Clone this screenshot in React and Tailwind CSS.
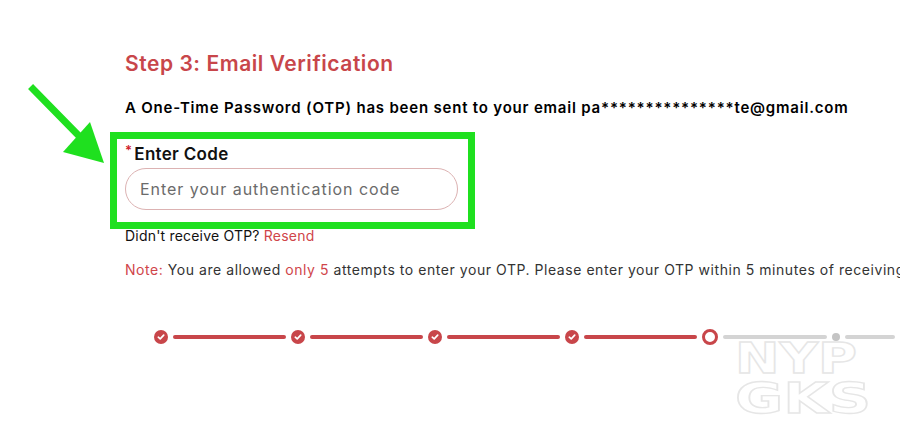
import React from 'react';

const CheckDot = () => (
  <div className="w-[14px] h-[14px] shrink-0 rounded-full bg-[#c8464a] flex items-center justify-center">
    <svg width="8" height="8" viewBox="0 0 8 8" fill="none">
      <path d="M1.3 4.2 L3.2 5.9 L6.7 2.2" stroke="white" strokeWidth="1.7" strokeLinecap="round" strokeLinejoin="round" />
    </svg>
  </div>
);

const Line = ({ gray }) => (
  <div className={`flex-1 h-[4px] mx-[5px] rounded-full ${gray ? 'bg-[#d4d4d4]' : 'bg-[#c8464a]'}`} />
);

const Stepper = () => (
  <div className="flex items-center pl-[154px] mt-[50px]">
    {[0, 1, 2, 3].map((i) => (
      <div key={i} className="flex items-center w-[137px] shrink-0">
        <CheckDot />
        <Line />
      </div>
    ))}
    <div className="flex items-center w-[130px] shrink-0">
      <div className="w-[16px] h-[16px] shrink-0 rounded-full border-[3px] border-[#c8464a] bg-white" />
      <Line gray />
    </div>
    <div className="flex items-center flex-1">
      <div className="w-[8px] h-[8px] shrink-0 rounded-full bg-[#c4c4c4]" />
      <Line gray />
    </div>
  </div>
);

export default function App() {
  return (
    <div className="relative w-[900px] h-[445px] bg-white overflow-hidden" style={{ fontFamily: 'Inter, "Open Sans", sans-serif' }}>
      {/* Main content */}
      <div className="pl-[125px] pt-[50px]">
        <h2 className="text-[21px] leading-[28px] font-semibold text-[#c8464a] tracking-[0.55px]">
          Step 3: Email Verification
        </h2>
        <p className="mt-[20px] text-[15px] leading-[20px] font-semibold text-black whitespace-nowrap tracking-[0.8px]">
          A One-Time Password (OTP) has been sent to your email pa***************te@gmail.com
        </p>

        {/* Highlighted field */}
        <div className="mt-[14px] -ml-[15px] w-[365px] border-[7px] border-[#1fe01f] pl-[8px] pr-[10px] pt-[4px] pb-[12px]">
          <label className="flex items-start text-[17px] leading-[22px] font-semibold text-[#111] tracking-[0.3px]">
            <span className="text-[#d0202a] text-[13px] leading-[14px] mr-[2px]">*</span>
            Enter Code
          </label>
          <input
            type="text"
            placeholder="Enter your authentication code"
            className="mt-[3px] w-full h-[42px] rounded-full border border-[#dcb2b2] px-[14px] text-[16px] text-[#333] placeholder:text-[#6b6b6b] outline-none tracking-[0.95px]"
          />
        </div>

        <p className="-mt-[2px] text-[14px] leading-[18px] text-[#111] tracking-[0.2px]">
          Didn't receive OTP? <span className="text-[#d0454a]">Resend</span>
        </p>
        <p className="mt-[16px] text-[14px] leading-[18px] text-[#333] whitespace-nowrap tracking-[0.55px]">
          <span className="text-[#d0454a]">Note:</span> You are allowed{' '}
          <span className="text-[#d0454a]">only 5</span> attempts to enter your OTP. Please enter your OTP within 5 minutes of receiving it.
        </p>
      </div>

      <Stepper />

      {/* Annotation arrow */}
      <svg className="absolute left-0 top-0" width="130" height="180" viewBox="0 0 130 180">
        <line x1="33" y1="89" x2="82" y2="139" stroke="#1fe01f" strokeWidth="7" strokeLinecap="square" />
        <polygon points="63,152 90,122 104,163" fill="#1fe01f" />
      </svg>

      {/* Watermark */}
      <svg className="absolute left-[730px] top-[336px]" width="150" height="84" viewBox="0 0 150 84">
        <text x="5" y="37" textLength="122" lengthAdjust="spacingAndGlyphs" fontFamily="DejaVu Sans, sans-serif" fontSize="42" fontWeight="bold" fill="none" stroke="#e6e6e6" strokeWidth="1.3">NYP</text>
        <text x="5" y="77" textLength="136" lengthAdjust="spacingAndGlyphs" fontFamily="DejaVu Sans, sans-serif" fontSize="42" fontWeight="bold" fill="none" stroke="#e6e6e6" strokeWidth="1.3">GKS</text>
      </svg>
    </div>
  );
}
